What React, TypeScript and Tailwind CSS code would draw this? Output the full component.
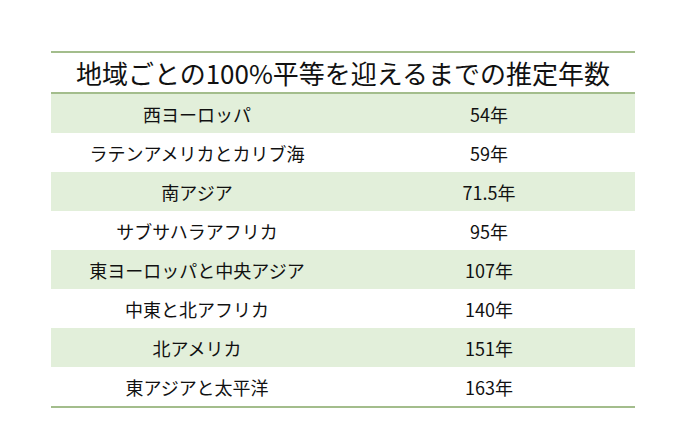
const ROWS: [string, string][] = [
  ["西ヨーロッパ", "54年"],
  ["ラテンアメリカとカリブ海", "59年"],
  ["南アジア", "71.5年"],
  ["サブサハラアフリカ", "95年"],
  ["東ヨーロッパと中央アジア", "107年"],
  ["中東と北アフリカ", "140年"],
  ["北アメリカ", "151年"],
  ["東アジアと太平洋", "163年"],
]

export default function App() {
  return (
    <div
      className="w-[673px] h-[442px] bg-white pt-[51px] pl-[51px] text-[#111]"
      style={{ fontFamily: '"Noto Sans CJK JP", "Noto Sans", sans-serif' }}
    >
      <div className="w-[584px]">
        <div className="h-[43px] border-y-2 border-[#a3bd8c] flex items-center justify-center text-[26px] leading-none">
          地域ごとの100%平等を迎えるまでの推定年数
        </div>
        {ROWS.map(([region, years], i) => (
          <div
            key={region}
            className={`h-[39px] grid grid-cols-2 items-center text-[18px] leading-none ${
              i % 2 === 0 ? "bg-[#e2efda]" : "bg-white"
            }`}
          >
            <div className="text-center">{region}</div>
            <div className="text-center">{years}</div>
          </div>
        ))}
        <div className="h-[2px] bg-[#a3bd8c]" />
      </div>
    </div>
  )
}
